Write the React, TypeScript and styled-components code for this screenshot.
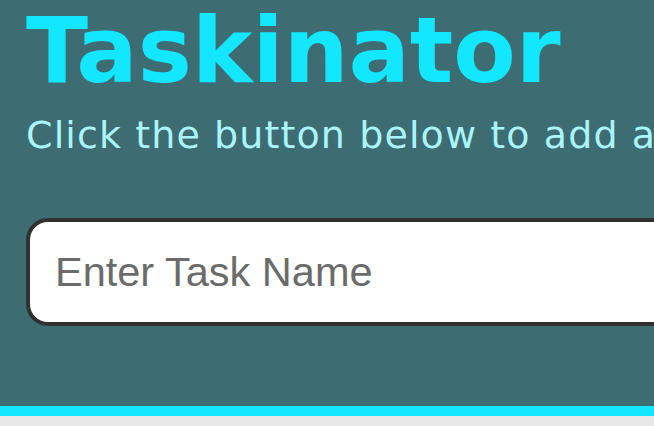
import React from 'react';
import styled, {createGlobalStyle} from "styled-components";

const GlobalStyle = createGlobalStyle`
  html, body {
    margin: 0;
    padding: 0;
    background-color: #e8e8e8;
    overflow: hidden;
  }
`

export default function App() {
    return (
        <>
            <GlobalStyle/>
            <Header>
                <Title>Taskinator</Title>
                <Subtitle>Click the button below to add a new task!</Subtitle>
                <TaskForm>
                    <TaskInput type="text" placeholder="Enter Task Name"/>
                </TaskForm>
            </Header>
        </>
    );
}

const Header = styled.header`
  box-sizing: border-box;
  height: 416px;
  padding: 0 0 0 26px;
  background-color: #3d6c72;
  border-bottom: 10px solid #13e6ff;
  overflow: hidden;
  white-space: nowrap;
`
const Title = styled.h1`
  margin: -2px 0 0;
  font-family: "DejaVu Sans", Verdana, sans-serif;
  font-weight: bold;
  font-size: 91px;
  line-height: 106px;
  color: #13e6ff;
`
const Subtitle = styled.p`
  margin: 9px 0 0;
  font-family: "DejaVu Sans", Verdana, sans-serif;
  font-size: 38px;
  letter-spacing: 1.1px;
  line-height: 44px;
  color: #aaf4fb;
`
const TaskForm = styled.form`
  margin-top: 61px;
`
const TaskInput = styled.input`
  box-sizing: border-box;
  width: 700px;
  height: 108px;
  padding: 0 25px;
  border: 4px solid #313131;
  border-radius: 22px;
  background: #fff;
  font-family: "Liberation Sans", Arial, sans-serif;
  font-size: 41.5px;
  outline: none;

  &::placeholder {
    color: #6b6b6b;
  }
`
